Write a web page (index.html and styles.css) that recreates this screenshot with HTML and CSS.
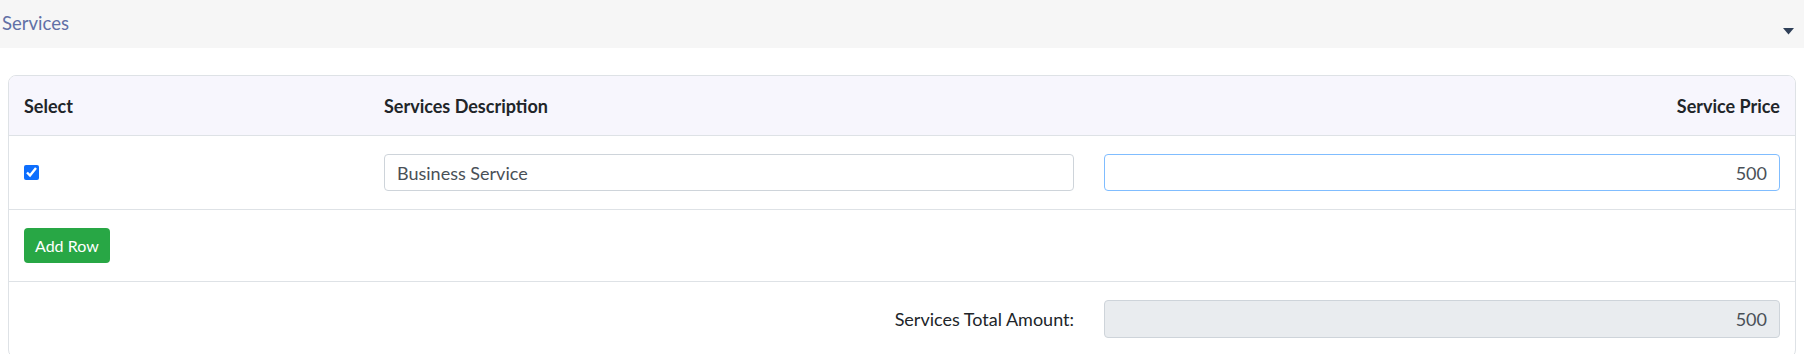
FILE: index.html
```html
<!DOCTYPE html>
<html>
<head>
    <title>Services</title>
    <link rel="stylesheet" href="styles.css">
</head>
<body>
    <div class="panel-head">
        <span class="panel-title">Services</span>
        <svg class="caret" width="11" height="7" viewBox="0 0 11 7"><path d="M0 0 L11 0 L5.5 6.5 Z" fill="#2f4058"/></svg>
    </div>

    <div class="card">
        <table class="svc-table">
            <colgroup>
                <col class="col-select">
                <col class="col-desc">
                <col>
            </colgroup>
            <thead>
                <tr>
                    <th>Select</th>
                    <th>Services Description</th>
                    <th class="right">Service Price</th>
                </tr>
            </thead>
            <tbody>
                <tr>
                    <td><input type="checkbox" class="check" checked></td>
                    <td><input type="text" class="field" value="Business Service"></td>
                    <td><input type="text" class="field field-num field-active" value="500"></td>
                </tr>
                <tr>
                    <td colspan="3"><button class="btn-add">Add Row</button></td>
                </tr>
                <tr>
                    <td></td>
                    <td class="right total-label">Services Total Amount:</td>
                    <td><input type="text" class="field field-num" value="500" readonly></td>
                </tr>
            </tbody>
        </table>
    </div>
</body>
</html>
```

FILE: styles.css
```css
body {
    margin: 0;
    font-family: Lato, "Open Sans", sans-serif;
    color: #212529;
    background-color: #fff;
}
.panel-head {
    display: flex;
    align-items: flex-start;
    justify-content: space-between;
    height: 48px;
    padding: 0 10px 0 2px;
    background-color: #f6f6f6;
}
.panel-title {
    margin-top: 12px;
    font-size: 18.5px;
    color: #6170a6;
}
.caret {
    display: block;
    margin-top: 28px;
}
.card {
    margin: 27px 8px 0 8px;
    border: 1px solid #dee2e6;
    border-radius: 8px;
    overflow: hidden;
}
.svc-table {
    width: 100%;
    border-collapse: collapse;
    table-layout: fixed;
}
.col-select { width: 360px; }
.col-desc { width: 720px; }
.svc-table th {
    height: 59px;
    padding: 0 15px;
    font-size: 18px;
    font-weight: bold;
    text-align: left;
    background-color: #f7f6fd;
    border-bottom: 1px solid #dee2e6;
}
.svc-table td {
    padding: 18px 15px;
    border-bottom: 1px solid #dee2e6;
    vertical-align: middle;
}
.svc-table .right { text-align: right; }
.check {
    display: block;
    width: 15px;
    height: 15px;
    margin: 0;
    accent-color: #0d6efd;
}
.field {
    display: block;
    box-sizing: border-box;
    width: 100%;
    height: 37px;
    padding: 0 12px;
    font-family: Lato, "Open Sans", sans-serif;
    font-size: 18px;
    color: #495057;
    background-color: #fff;
    border: 1px solid #ced4da;
    border-radius: 4px;
    outline: none;
}
.field-num { text-align: right; }
.field-active { border-color: #80bdff; }
.field[readonly] {
    height: 38px;
    background-color: #e9ecef;
}
.total-label {
    font-size: 18px;
    color: #212529;
}
.btn-add {
    display: block;
    height: 35px;
    padding: 0 11px;
    font-family: Lato, "Open Sans", sans-serif;
    font-size: 16px;
    color: #fff;
    background-color: #28a745;
    border: none;
    border-radius: 4px;
    cursor: pointer;
}
```
